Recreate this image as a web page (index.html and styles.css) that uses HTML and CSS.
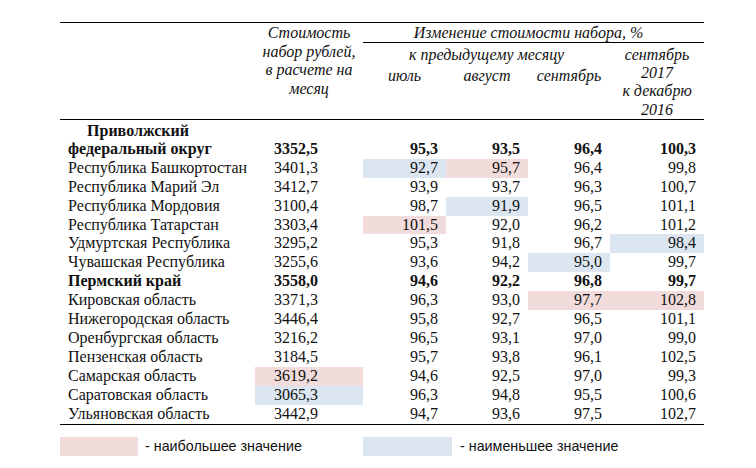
FILE: index.html
```html
<!DOCTYPE html>
<html lang="ru">
<head>
<meta charset="utf-8">
<link rel="stylesheet" href="styles.css">
</head>
<body>
<table class="tbl">
  <colgroup>
    <col class="c-name"><col class="c-cost"><col class="c-m"><col class="c-m2"><col class="c-m2"><col class="c-last">
  </colgroup>
  <thead>
    <tr class="h1">
      <th rowspan="3" class="hd-empty"></th>
      <th rowspan="3" class="hd-cost">Стоимость<br>набор рублей,<br>в расчете на<br>месяц</th>
      <th colspan="4" class="hd-top">Изменение стоимости набора, %</th>
    </tr>
    <tr class="h2">
      <th colspan="3" class="hd-prev">к предыдущему месяцу</th>
      <th rowspan="2" class="hd-last">сентябрь<br>2017<br>к декабрю<br>2016</th>
    </tr>
    <tr class="h3">
      <th class="hd-mon">июль</th>
      <th class="hd-mon">август</th>
      <th class="hd-mon">сентябрь</th>
    </tr>
  </thead>
  <tbody>
    <tr class="total">
      <td class="name"><div class="fed">Приволжский<br>федеральный округ</div></td>
      <td class="num cost">3352,5</td><td class="num">95,3</td><td class="num">93,5</td><td class="num">96,4</td><td class="num">100,3</td>
    </tr>
    <tr><td class="name">Республика Башкортостан</td><td class="num cost">3401,3</td><td class="num lo">92,7</td><td class="num hi">95,7</td><td class="num">96,4</td><td class="num">99,8</td></tr>
    <tr><td class="name">Республика Марий Эл</td><td class="num cost">3412,7</td><td class="num">93,9</td><td class="num">93,7</td><td class="num">96,3</td><td class="num">100,7</td></tr>
    <tr><td class="name">Республика Мордовия</td><td class="num cost">3100,4</td><td class="num">98,7</td><td class="num lo">91,9</td><td class="num">96,5</td><td class="num">101,1</td></tr>
    <tr><td class="name">Республика Татарстан</td><td class="num cost">3303,4</td><td class="num hi">101,5</td><td class="num">92,0</td><td class="num">96,2</td><td class="num">101,2</td></tr>
    <tr><td class="name">Удмуртская Республика</td><td class="num cost">3295,2</td><td class="num">95,3</td><td class="num">91,8</td><td class="num">96,7</td><td class="num lo">98,4</td></tr>
    <tr><td class="name">Чувашская Республика</td><td class="num cost">3255,6</td><td class="num">93,6</td><td class="num">94,2</td><td class="num lo">95,0</td><td class="num">99,7</td></tr>
    <tr class="bold"><td class="name">Пермский край</td><td class="num cost">3558,0</td><td class="num">94,6</td><td class="num">92,2</td><td class="num">96,8</td><td class="num">99,7</td></tr>
    <tr><td class="name">Кировская область</td><td class="num cost">3371,3</td><td class="num">96,3</td><td class="num">93,0</td><td class="num hi">97,7</td><td class="num hi">102,8</td></tr>
    <tr><td class="name">Нижегородская область</td><td class="num cost">3446,4</td><td class="num">95,8</td><td class="num">92,7</td><td class="num">96,5</td><td class="num">101,1</td></tr>
    <tr><td class="name">Оренбургская область</td><td class="num cost">3216,2</td><td class="num">96,5</td><td class="num">93,1</td><td class="num">97,0</td><td class="num">99,0</td></tr>
    <tr><td class="name">Пензенская область</td><td class="num cost">3184,5</td><td class="num">95,7</td><td class="num">93,8</td><td class="num">96,1</td><td class="num">102,5</td></tr>
    <tr><td class="name">Самарская область</td><td class="num cost hi">3619,2</td><td class="num">94,6</td><td class="num">92,5</td><td class="num">97,0</td><td class="num">99,3</td></tr>
    <tr><td class="name">Саратовская область</td><td class="num cost lo">3065,3</td><td class="num">96,3</td><td class="num">94,8</td><td class="num">95,5</td><td class="num">100,6</td></tr>
    <tr class="last"><td class="name">Ульяновская область</td><td class="num cost">3442,9</td><td class="num">94,7</td><td class="num">93,6</td><td class="num">97,5</td><td class="num">102,7</td></tr>
  </tbody>
</table>
<div class="legend">
  <span class="swatch sw-hi"></span><span class="ltext lt-hi">- наибольшее значение</span>
  <span class="swatch sw-lo"></span><span class="ltext">- наименьшее значение</span>
</div>
</body>
</html>
```
FILE: styles.css
```css
html, body {
  margin: 0;
  padding: 0;
  background: #fff;
}
body {
  font-family: "Liberation Serif", "Times New Roman", serif;
  font-size: 16px;
  color: #111;
}
.tbl {
  margin: 22px 0 0 60px;
  border-collapse: collapse;
  table-layout: fixed;
  width: 644px;
  border-top: 1px solid #000;
}
.c-name { width: 195px; }
.c-cost { width: 108px; }
.c-m { width: 83px; }
.c-m2 { width: 82px; }
.c-last { width: 94px; }

th, td {
  padding: 0;
  font-weight: normal;
}
thead th {
  font-style: italic;
  text-align: center;
  vertical-align: top;
  line-height: 18.7px;
}
thead tr.h3 th, thead .hd-empty, thead .hd-cost, thead .hd-last {
  border-bottom: 1px solid #000;
}
.h1 { height: 20px; }
.h2 { height: 22px; }
.h3 { height: 54px; }
.hd-cost { padding-top: 1px; }
.hd-top {
  border-bottom: 1px solid #000;
  padding-left: 0;
  padding-right: 10px;
  vertical-align: middle;
  line-height: 18px;
}
.hd-prev { padding-top: 3px; }
.hd-mon { padding-top: 2px; }
.hd-last { padding-top: 3px; line-height: 18.2px; }

tbody td {
  line-height: 18.9px;
  height: 18.9px;
  white-space: nowrap;
}
.name { padding-left: 8px; }
.num { text-align: right; padding-right: 8px; }
.num.cost { padding-right: 45px; }

tr.total td {
  font-weight: bold;
  vertical-align: bottom;
  padding-top: 2px;
  line-height: 18.5px;
}
.fed {
  width: 140px;
  text-align: center;
}
tr.bold td { font-weight: bold; }
tr.last td { border-bottom: 1px solid #000; }

.hi { background: #f2dcdb; }
.lo { background: #dce6f1; }

.legend {
  display: flex;
  align-items: center;
  margin: 12px 0 0 60px;
  font-family: "Liberation Sans", Arial, sans-serif;
  font-size: 14.3px;
  color: #111;
}
.swatch {
  display: block;
  height: 19px;
}
.sw-hi { width: 78px; background: #f2dcdb; margin-right: 7px; }
.sw-lo { width: 89px; background: #dce6f1; margin-right: 8px; }
.lt-hi { width: 218px; }
```
